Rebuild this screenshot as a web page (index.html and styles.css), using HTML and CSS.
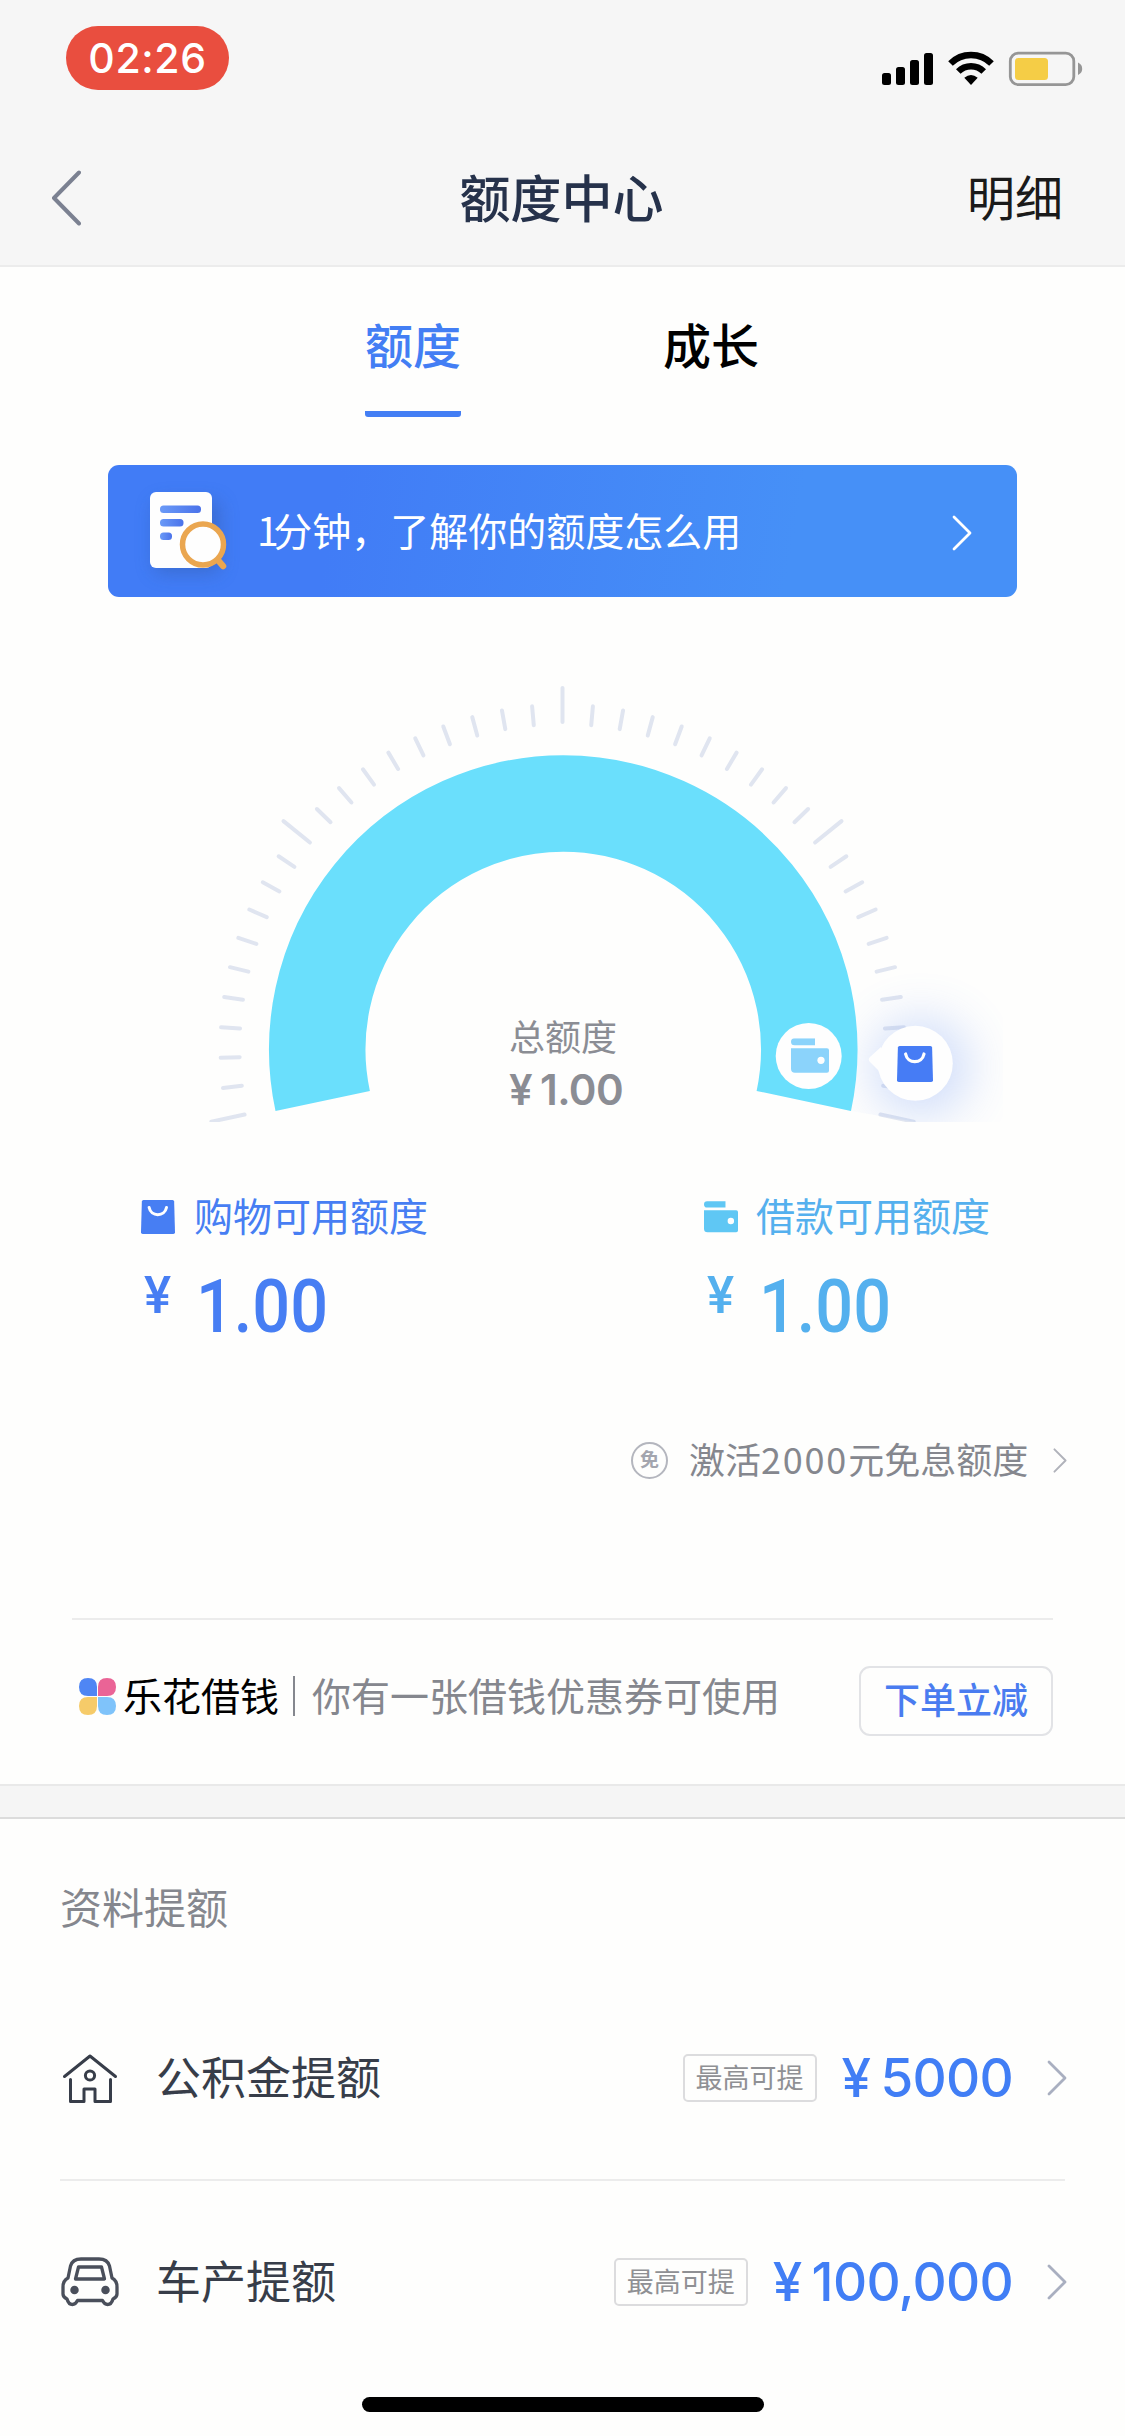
FILE: index.html
```html
<!DOCTYPE html>
<html lang="zh-CN">
<head>
<meta charset="utf-8">
<title>额度中心</title>
<link rel="stylesheet" href="styles.css">
</head>
<body>
<svg width="0" height="0" class="defs">
  <defs>
    <symbol id="bag" viewBox="0 0 36 36">
      <path d="M2.6 0h30.8q1.6 0 1.7 1.6L36 34.2q0 1.8-1.8 1.8H1.8Q0 36 0 34.2L.9 1.6Q1 0 2.6 0z" fill="currentColor"/>
      <path d="M8.6 8c1 5 4.900 7.600 9.200 7.600S26 13 27 8" fill="none" stroke="#fefefe" stroke-width="3.200" stroke-linecap="round"/>
    </symbol>
    <symbol id="wallet" viewBox="0 0 38 35">
      <path d="M3.500 0H24v7H3.500Q0 7 0 3.500T3.500 0zM0 10h36q2 0 2 2v20.500q0 2-2 2H4q-4 0-4-4z" fill="currentColor"/>
      <circle cx="30" cy="22" r="3.600" fill="#fefefe"/>
    </symbol>
    <symbol id="chevron" viewBox="0 0 20 36">
      <path d="M2 2l16 16L2 34" fill="none" stroke="currentColor" stroke-width="2.800" stroke-linecap="round" stroke-linejoin="round"/>
    </symbol>
  </defs>
</svg>

<header class="top">
  <div class="status">
    <span class="clock">02:26</span>
    <svg class="status-icons" viewBox="0 0 202 36">
      <g>
        <rect x="0" y="22" width="9" height="12" rx="2.500"/>
        <rect x="14" y="16" width="9" height="18" rx="2.500"/>
        <rect x="28" y="9" width="9" height="25" rx="2.500"/>
        <rect x="42" y="2" width="9" height="32" rx="2.500"/>
      </g>
      <g fill="none" stroke="#000" stroke-width="6.500">
        <path d="M68.500 12.500a29 29 0 0 1 41 0"/>
        <path d="M76.300 20.500a18 18 0 0 1 25.400 0"/>
      </g>
      <path d="M82.300 26.800q6.700-5.400 13.400 0L89 34z"/>
      <rect x="128.300" y="2.200" width="63.500" height="31.500" rx="8" fill="none" stroke="#969696" stroke-width="2.800"/>
      <rect x="133" y="7" width="33" height="22" rx="3.500" fill="#f5cd46"/>
      <path d="M196 11.500q4.200 2 4.200 6.300t-4.200 6.200z" fill="#969696"/>
    </svg>
  </div>
  <nav class="nav">
    <svg class="back" viewBox="0 0 32 56"><path d="M30 2.500L5 28l25 25.500" fill="none" stroke="#7b8191" stroke-width="4" stroke-linecap="round" stroke-linejoin="round"/></svg>
    <h1 class="title">额度中心</h1>
    <a class="detail">明细</a>
  </nav>
</header>

<main>
  <div class="tabs">
    <a class="tab active">额度</a>
    <a class="tab">成长</a>
  </div>

  <a class="banner">
    <svg class="doc" viewBox="0 0 80 84">
      <defs>
        <linearGradient id="bar"><stop offset="0" stop-color="#6a9af7"/><stop offset="1" stop-color="#4a72ea"/></linearGradient>
        <filter id="soft" x="-50%" y="-50%" width="200%" height="200%"><feGaussianBlur stdDeviation="9"/></filter>
      </defs>
      <rect x="6" y="12" width="66" height="72" rx="8" fill="#355dae" opacity=".5" filter="url(#soft)"/>
      <rect x="2" y="3" width="62" height="76" rx="6" fill="#fefefe"/>
      <g fill="url(#bar)">
        <rect x="12" y="16.500" width="41" height="7.500" rx="3.500"/>
        <rect x="12" y="30" width="23.500" height="7.500" rx="3.500"/>
        <rect x="12" y="43.500" width="12" height="7.500" rx="3.500"/>
      </g>
      <path d="M69 70l6 7" stroke="#eaa650" stroke-width="6.500" stroke-linecap="round"/>
      <circle cx="55" cy="55.500" r="20.500" fill="#fefefe" stroke="#eaa650" stroke-width="5.500"/>
    </svg>
    <span class="banner-text"><b>1</b>分钟，了解你的额度怎么用</span>
    <svg class="banner-arrow"><use href="#chevron"/></svg>
  </a>

  <section class="gauge">
    <svg class="dial" viewBox="0 677 1125 445">
      <defs>
        <path id="short" d="M0-342v19"/>
        <g id="nine">
          <use href="#short" transform="rotate(5.100)"/><use href="#short" transform="rotate(10.200)"/><use href="#short" transform="rotate(15.300)"/>
          <use href="#short" transform="rotate(20.400)"/><use href="#short" transform="rotate(25.500)"/><use href="#short" transform="rotate(30.600)"/>
          <use href="#short" transform="rotate(35.700)"/><use href="#short" transform="rotate(40.800)"/><use href="#short" transform="rotate(45.900)"/>
        </g>
        <path id="long" d="M0-359v34"/>
        <filter id="glow" x="-100%" y="-100%" width="300%" height="300%"><feGaussianBlur stdDeviation="26"/></filter>
        <clipPath id="glow-area"><path d="M760 900H1003V1122H915L851 1111L760 1095z"/></clipPath>
      </defs>
      <g transform="translate(562.500 1047)" stroke="#e0e5f0" stroke-width="4" stroke-linecap="round">
        <use href="#nine" transform="rotate(-102)"/><use href="#nine" transform="rotate(-51)"/>
        <use href="#nine"/><use href="#nine" transform="rotate(51)"/>
        <use href="#long" transform="rotate(-102)"/><use href="#long" transform="rotate(-51)"/>
        <use href="#long"/><use href="#long" transform="rotate(51)"/><use href="#long" transform="rotate(102)"/>
      </g>
      <g clip-path="url(#glow-area)"><circle cx="921" cy="1067" r="46" fill="#5f8cf5" opacity=".33" filter="url(#glow)"/></g>
      <path d="M322.700 1101A246 246 0 1 1 803.800 1101" fill="none" stroke="#6adffc" stroke-width="96.500"/>
      <circle cx="808.700" cy="1056" r="33" fill="#fefefe"/>
      <use href="#wallet" x="791" y="1038.300" width="38" height="35" color="#8bd3fb"/>
      <path d="M881 1047l-11 10q-2.500 2.500 0 5l11 11z" fill="#fefefe"/>
      <circle cx="915.300" cy="1063.300" r="37.500" fill="#fefefe"/>
      <use href="#bag" x="897" y="1045.700" width="36" height="36.500" color="#467cf5"/>
    </svg>
    <div class="total">
      <span class="total-label">总额度</span>
      <span class="total-value"><i>¥</i>1.00</span>
    </div>
  </section>

  <section class="quotas">
    <div class="quota shop">
      <div class="quota-head"><svg class="quota-icon"><use href="#bag"/></svg><span class="quota-name">购物可用额度</span></div>
      <div class="quota-sum"><span class="yen">¥</span><span class="num">1.00</span></div>
    </div>
    <div class="quota loan">
      <div class="quota-head"><svg class="quota-icon"><use href="#wallet"/></svg><span class="quota-name">借款可用额度</span></div>
      <div class="quota-sum"><span class="yen">¥</span><span class="num">1.00</span></div>
    </div>
  </section>

  <a class="activate">
    <span class="free">免</span>
    <span class="activate-text">激活<b>2000</b>元免息额度</span>
    <svg class="activate-arrow"><use href="#chevron"/></svg>
  </a>

  <section class="promo">
    <div class="promo-info">
      <svg class="petals" viewBox="0 0 37 37">
        <path d="M9 0q9 0 9 9v9H9Q0 18 0 9T9 0z" fill="#4f86f4"/>
        <path d="M28 0q9 0 9 9t-9 9h-9V9q0-9 9-9z" fill="#ea6496"/>
        <path d="M9 19h9v9q0 9-9 9t-9-9 9-9z" fill="#f6cb69"/>
        <path d="M19 19h9q9 0 9 9t-9 9-9-9z" fill="#7fc3fa"/>
      </svg>
      <span class="brand">乐花借钱</span>
      <span class="bar"></span>
      <span class="offer">你有一张借钱优惠券可使用</span>
    </div>
    <a class="order">下单立减</a>
  </section>
</main>

<div class="band"></div>
<section class="raise">
  <h2 class="raise-title">资料提额</h2>
  <a class="row">
    <svg class="row-icon" viewBox="0 0 60 54" fill="none" stroke="#373d49" stroke-width="3" stroke-linecap="round" stroke-linejoin="round">
      <path d="M4.500 25.500L30 5l25.500 20.500M10.500 28.500v22H24V38h11v12.500h15.500v-22"/>
      <circle cx="30" cy="24.500" r="4.600"/>
    </svg>
    <span class="row-name">公积金提额</span>
    <span class="tag">最高可提</span>
    <span class="amount"><i>¥</i>5000</span>
    <svg class="row-arrow"><use href="#chevron"/></svg>
  </a>
  <a class="row">
    <svg class="row-icon" viewBox="0 0 60 54" fill="none" stroke="#4a4f5b" stroke-width="3.300" stroke-linecap="round" stroke-linejoin="round">
      <path d="M21 4h18q8.500 0 10.500 7l2.500 12q5 2.500 5 9v7q0 3-4 5-1.500 5.500-5.500 5.500-3 0-5-4H17.500q-2 4-5 4-4 0-5.500-5.500-4-2-4-5v-7q0-6.500 5-9L10.500 11Q12.500 4 21 4z"/>
      <path d="M18.500 12h23l3 12h-29z"/>
      <circle cx="14.500" cy="35" r="2.600" fill="#4a4f5b"/><circle cx="45.500" cy="35" r="2.600" fill="#4a4f5b"/>
    </svg>
    <span class="row-name">车产提额</span>
    <span class="tag">最高可提</span>
    <span class="amount"><i>¥</i>100,000</span>
    <svg class="row-arrow"><use href="#chevron"/></svg>
  </a>
</section>
<footer class="home"></footer>
</body>
</html>
```
FILE: styles.css
```css
* { box-sizing: border-box; }
body {
  margin: 0;
  width: 1125px;
  height: 2436px;
  overflow: hidden;
  display: flex;
  flex-direction: column;
  background: #fefefd;
  font-family: "Noto Sans CJK SC", sans-serif;
  line-height: 1;
}
.defs { position: absolute; }
svg { display: block; flex: none; }
h1, h2 { margin: 0; font-weight: 400; }
i, b { font-style: normal; font-weight: inherit; }
span, a { white-space: nowrap; }

.top { height: 267px; background: #f6f6f6; border-bottom: 2px solid #ececec; flex: none; }
.status { height: 132px; padding: 26px 41px 0 66px; display: flex; justify-content: space-between; align-items: flex-start; }
.clock {
  width: 163px; height: 64px; border-radius: 32px; background: #e94e3f; color: #fff;
  font: 500 41px/64px Inter, sans-serif; text-align: center; letter-spacing: .6px;
}
.status-icons { width: 202px; height: 36px; margin-top: 25px; }
.nav { height: 132px; padding: 0 62px 0 49px; display: grid; grid-template-columns: 1fr auto 1fr; align-items: center; }
.back { width: 32px; height: 56px; }
.title { font-size: 51px; font-weight: 500; color: #26324b; margin-left: 11px; padding-bottom: 4px; }
.detail { font-size: 48px; color: #1a1a1a; justify-self: end; padding-bottom: 6px; }

.tabs { height: 198px; padding: 0 365px 48px; display: flex; gap: 202px; }
.tab { height: 150px; width: 96px; font-size: 48px; font-weight: 500; line-height: 152px; color: #000; }
.tab.active { color: #437ef4; background: linear-gradient(#437ef4, #437ef4) bottom / 100% 6px no-repeat; border-radius: 0 0 3px 3px; }

.banner {
  width: 909px; height: 132px; margin: 0 auto; padding: 0 44px 0 40px; border-radius: 11px;
  background: linear-gradient(100deg, #417cf6 25%, #4690f7 75%);
  display: flex; align-items: center; overflow: hidden;
}
.doc { width: 80px; height: 84px; overflow: visible; }
.banner-text { margin-left: 29px; padding-bottom: 3px; font-size: 39px; color: #fff; flex: 1; }
.banner-text b { letter-spacing: -5.500px; }
.banner-arrow { width: 22px; height: 36px; color: #fff; margin-top: 3px; }

.gauge { height: 525px; padding-top: 80px; display: grid; }
.dial, .total { grid-area: 1 / 1; }
.dial { width: 1125px; height: 445px; }
.total { display: flex; flex-direction: column; align-items: flex-start; padding: 340px 0 0 509px; color: #8b8d94; }
.total-label { font-size: 36px; }
.total-value { font: 600 42px/44px Inter, sans-serif; margin-top: 15px; letter-spacing: -.6px; }
.total-value i { margin-right: 8px; }

.quotas { height: 250px; padding: 74px 0 0 141px; display: flex; }
.quota { width: 563px; flex: none; }
.shop { color: #477ef3; }
.loan { color: #54b0ee; width: 300px; }
.quota-head { height: 42px; display: flex; align-items: center; gap: 19px; font-size: 39px; }
.loan .quota-head { gap: 18px; }
.quota-icon { width: 34px; height: 36px; }
.quota-name { padding-bottom: 6px; }
.loan .quota-icon { color: #5fc7f4; }
.quota-sum { display: flex; align-items: flex-start; padding: 26px 0 0 3px; }
.yen { width: 52px; margin-top: 1px; font: 500 51px/62px Roboto, sans-serif; }
.num { font: 500 74px/86px Roboto, sans-serif; transform: scaleX(.9); transform-origin: 0 0; }

.activate { height: 176px; padding: 0 58px 0 631px; display: flex; align-items: center; color: #85878e; }
.free { width: 37px; height: 37px; border: 2.500px solid #b4b6be; border-radius: 50%; font-size: 19px; font-weight: 700; line-height: 30px; text-align: center; color: #a3a5ae; }
.activate-text { margin-left: 21px; padding-bottom: 4px; font-size: 36px; flex: 1; }
.activate-text b { letter-spacing: 1.800px; }
.activate-arrow { width: 14px; height: 25px; color: #b0b2ba; }

.promo { height: 166px; margin: 70px 72px 0; padding: 0 0 0 7px; border-top: 2px solid #ececec; display: flex; align-items: center; }
.promo-info { flex: 1; display: flex; align-items: center; padding-bottom: 12px; }
.petals { width: 37px; height: 37px; }
.brand { margin-left: 7px; padding-bottom: 4px; font-size: 39px; color: #000; }
.bar { width: 2px; height: 40px; margin: 0 17px 0 14px; background: #85878e; }
.offer { padding-bottom: 4px; font-size: 39px; color: #85878e; flex: 1; }
.order { width: 194px; height: 70px; margin-bottom: 3px; border: 2px solid #e2e3e6; border-radius: 11px; font-size: 36px; font-weight: 500; line-height: 61px; text-align: center; color: #4a7cf0; }

.band { flex: none; height: 35px; background: #f5f5f5; border-top: 2px solid #e9e9e9; border-bottom: 2px solid #dcdcdc; }
.raise { padding: 0 58px 0 60px; height: 567px; flex: none; }
.raise-title { font-size: 42px; height: 158px; line-height: 173px; color: #85878e; }
.row { height: 204px; display: flex; align-items: center; border-bottom: 2px solid #ececec; margin-right: 2px; }
.row:last-child { border-color: transparent; }
.row-icon { width: 60px; height: 54px; }
.row-name { margin-left: 36px; padding-bottom: 6px; font-size: 45px; color: #373d49; flex: 1; }
.tag { height: 48px; width: 134px; border: 2px solid #dcdcde; border-radius: 5px; font-size: 27px; line-height: 41px; text-align: center; color: #8f9094; }
.amount { margin-left: 25px; font: 500 53px/60px Inter, sans-serif; letter-spacing: -.7px; color: #417ef5; }
.amount i { margin-right: 10px; }
.row-arrow { width: 20px; height: 36px; margin: 0 -2px 0 34px; color: #a9afc0; }

.home { width: 402px; height: 15px; border-radius: 8px; background: #000; margin: 11px auto 0; flex: none; }
```
